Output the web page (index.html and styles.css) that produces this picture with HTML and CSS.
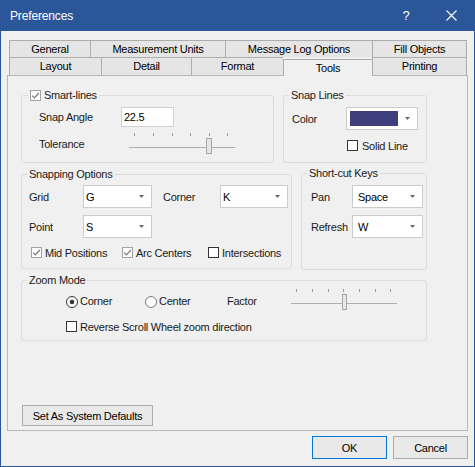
FILE: index.html
```html
<!DOCTYPE html>
<html>
<head>
<meta charset="utf-8">
<title>Preferences</title>
<link rel="stylesheet" href="styles.css">
</head>
<body>
<div class="window">
  <div class="titlebar">
    <span class="title">Preferences</span>
    <div class="tbtns">
      <span class="tbtn help">?</span>
      <span class="tbtn close"><svg width="11" height="11" viewBox="0 0 11 11"><path d="M0.5 0.5 L10.5 10.5 M10.5 0.5 L0.5 10.5" stroke="#ffffff" stroke-width="1.1" fill="none"/></svg></span>
    </div>
  </div>

  <div class="tabs">
    <div class="tabrow r1">
      <div class="tab t-general">General</div>
      <div class="tab t-units">Measurement Units</div>
      <div class="tab t-log">Message Log Options</div>
      <div class="tab t-fill last">Fill Objects</div>
    </div>
    <div class="tabrow r2">
      <div class="tab t-layout">Layout</div>
      <div class="tab t-detail">Detail</div>
      <div class="tab t-format">Format</div>
      <div class="tab t-tools sel">Tools</div>
      <div class="tab t-print last">Printing</div>
    </div>
  </div>

  <div class="panel">
    <div class="prow row-a">
      <div class="group g-smart">
        <div class="legend legend-cb">
          <svg class="cb" width="11" height="11" viewBox="0 0 11 11"><rect x="0.5" y="0.5" width="10" height="10" fill="#ffffff" stroke="#a3a3a3"/><path d="M2.2 5.6 L4.4 7.9 L8.9 3" fill="none" stroke="#7c7c7c" stroke-width="1.3"/></svg>
          <span>Smart-lines</span>
        </div>
        <div class="line l-angle">
          <span class="lbl w82">Snap Angle</span>
          <div class="input">22.5</div>
        </div>
        <div class="line l-tol">
          <span class="lbl w90">Tolerance</span>
          <svg class="slider" width="106" height="22" viewBox="0 0 106 22">
            <g stroke="#9a9a9a" stroke-width="1">
              <line x1="5.5" y1="0" x2="5.5" y2="3"/>
              <line x1="24.5" y1="0" x2="24.5" y2="3"/>
              <line x1="43.5" y1="0" x2="43.5" y2="3"/>
              <line x1="61.5" y1="0" x2="61.5" y2="3"/>
              <line x1="80.5" y1="0" x2="80.5" y2="3"/>
              <line x1="98.5" y1="0" x2="98.5" y2="3"/>
            </g>
            <line x1="0" y1="14.5" x2="106" y2="14.5" stroke="#b0b0b0" stroke-width="1"/>
            <rect x="77.5" y="5.5" width="5" height="15" fill="#e6e6e6" stroke="#a5a5a5"/>
          </svg>
        </div>
      </div>

      <div class="group g-snaplines">
        <div class="legend"><span>Snap Lines</span></div>
        <div class="line l-color">
          <span class="lbl w54">Color</span>
          <div class="combo c-color">
            <span class="swatch"></span>
            <svg class="arrow" width="5" height="3" viewBox="0 0 5 3"><path d="M0 0 H5 L2.5 3 Z" fill="#6a6a6a"/></svg>
          </div>
        </div>
        <div class="line l-solid">
          <label class="check">
            <svg class="cb" width="11" height="11" viewBox="0 0 11 11"><rect x="0.5" y="0.5" width="10" height="10" fill="#ffffff" stroke="#333333"/></svg>
            <span>Solid Line</span>
          </label>
        </div>
      </div>
    </div>

    <div class="prow row-b">
      <div class="group g-snapping">
        <div class="legend"><span>Snapping Options</span></div>
        <div class="line l-grid">
          <span class="lbl w54">Grid</span>
          <div class="combo c-69"><span class="ctext">G</span><svg class="arrow" width="5" height="3" viewBox="0 0 5 3"><path d="M0 0 H5 L2.5 3 Z" fill="#6a6a6a"/></svg></div>
          <span class="lbl w57 ml11">Corner</span>
          <div class="combo c-68"><span class="ctext">K</span><svg class="arrow" width="5" height="3" viewBox="0 0 5 3"><path d="M0 0 H5 L2.5 3 Z" fill="#6a6a6a"/></svg></div>
        </div>
        <div class="line l-point">
          <span class="lbl w54">Point</span>
          <div class="combo c-69"><span class="ctext">S</span><svg class="arrow" width="5" height="3" viewBox="0 0 5 3"><path d="M0 0 H5 L2.5 3 Z" fill="#6a6a6a"/></svg></div>
        </div>
        <div class="line l-checks">
          <label class="check w91">
            <svg class="cb" width="11" height="11" viewBox="0 0 11 11"><rect x="0.5" y="0.5" width="10" height="10" fill="#ffffff" stroke="#a3a3a3"/><path d="M2.2 5.6 L4.4 7.9 L8.9 3" fill="none" stroke="#7c7c7c" stroke-width="1.3"/></svg>
            <span>Mid Positions</span>
          </label>
          <label class="check w86">
            <svg class="cb" width="11" height="11" viewBox="0 0 11 11"><rect x="0.5" y="0.5" width="10" height="10" fill="#ffffff" stroke="#a3a3a3"/><path d="M2.2 5.6 L4.4 7.9 L8.9 3" fill="none" stroke="#7c7c7c" stroke-width="1.3"/></svg>
            <span>Arc Centers</span>
          </label>
          <label class="check">
            <svg class="cb" width="11" height="11" viewBox="0 0 11 11"><rect x="0.5" y="0.5" width="10" height="10" fill="#ffffff" stroke="#333333"/></svg>
            <span>Intersections</span>
          </label>
        </div>
      </div>

      <div class="group g-shortcut">
        <div class="legend"><span>Short-cut Keys</span></div>
        <div class="line l-pan">
          <span class="lbl w41">Pan</span>
          <div class="combo c-71"><span class="ctext wide">Space</span><svg class="arrow" width="5" height="3" viewBox="0 0 5 3"><path d="M0 0 H5 L2.5 3 Z" fill="#6a6a6a"/></svg></div>
        </div>
        <div class="line l-refresh">
          <span class="lbl w41">Refresh</span>
          <div class="combo c-71"><span class="ctext wide">W</span><svg class="arrow" width="5" height="3" viewBox="0 0 5 3"><path d="M0 0 H5 L2.5 3 Z" fill="#6a6a6a"/></svg></div>
        </div>
      </div>
    </div>

    <div class="prow row-c">
      <div class="group g-zoom">
        <div class="legend"><span>Zoom Mode</span></div>
        <div class="line l-mode">
          <label class="radio w79">
            <svg width="12" height="12" viewBox="0 0 12 12"><circle cx="6" cy="6" r="5.5" fill="#ffffff" stroke="#333333"/><circle cx="6" cy="6" r="2.3" fill="#333333"/></svg>
            <span>Corner</span>
          </label>
          <label class="radio w82">
            <svg width="12" height="12" viewBox="0 0 12 12"><circle cx="6" cy="6" r="5.5" fill="#ffffff" stroke="#7a7a7a"/></svg>
            <span>Center</span>
          </label>
          <span class="lbl w64 factor">Factor</span>
          <svg class="slider" width="106" height="22" viewBox="0 0 106 22">
            <g stroke="#9a9a9a" stroke-width="1">
              <line x1="5.5" y1="0" x2="5.5" y2="3"/>
              <line x1="21.5" y1="0" x2="21.5" y2="3"/>
              <line x1="37.5" y1="0" x2="37.5" y2="3"/>
              <line x1="52.5" y1="0" x2="52.5" y2="3"/>
              <line x1="68.5" y1="0" x2="68.5" y2="3"/>
              <line x1="84.5" y1="0" x2="84.5" y2="3"/>
              <line x1="99.5" y1="0" x2="99.5" y2="3"/>
            </g>
            <line x1="0" y1="14.5" x2="106" y2="14.5" stroke="#b0b0b0" stroke-width="1"/>
            <rect x="51.5" y="5.5" width="4" height="15" fill="#e6e6e6" stroke="#a5a5a5"/>
          </svg>
        </div>
        <div class="line l-reverse">
          <label class="check">
            <svg class="cb" width="11" height="11" viewBox="0 0 11 11"><rect x="0.5" y="0.5" width="10" height="10" fill="#ffffff" stroke="#333333"/></svg>
            <span>Reverse Scroll Wheel zoom direction</span>
          </label>
        </div>
      </div>
    </div>

    <div class="prow row-d">
      <div class="button b-defaults">Set As System Defaults</div>
    </div>
  </div>

  <div class="footer">
    <div class="button b-dlg b-ok">OK</div>
    <div class="button b-dlg">Cancel</div>
  </div>
</div>
</body>
</html>
```

FILE: styles.css
```css
* { box-sizing: border-box; }

html, body {
  margin: 0;
  padding: 0;
}

body {
  background: #f0f0f0;
  font-family: "Liberation Sans", Arial, sans-serif;
  font-size: 11px;
  letter-spacing: -0.25px;
  color: #1a1a1a;
}

.window {
  width: 475px;
  height: 467px;
  border: 1px solid #2b579a;
  border-top: none;
  background: #f0f0f0;
  display: flex;
  flex-direction: column;
}

/* title bar */
.titlebar {
  height: 31px;
  background: #2b579a;
  color: #ffffff;
  display: flex;
  align-items: center;
  flex-shrink: 0;
}

.title {
  padding-left: 9px;
  font-size: 12px;
  letter-spacing: -0.15px;
}

.tbtns {
  margin-left: auto;
  display: flex;
  height: 31px;
}

.tbtn {
  height: 31px;
  display: flex;
  align-items: center;
  justify-content: center;
}

.help {
  width: 46px;
  font-size: 13px;
  letter-spacing: 0;
}

.close {
  width: 45px;
}

/* tabs */
.tabs {
  margin-top: 9px;
  margin-left: 8px;
  display: flex;
  flex-direction: column;
}

.tabrow {
  display: flex;
  align-items: flex-start;
}

.tab {
  border-top: 1px solid #adadad;
  border-left: 1px solid #adadad;
  background: #e5e5e5;
  color: #000000;
  display: flex;
  align-items: center;
  justify-content: center;
  padding-bottom: 1px;
  white-space: nowrap;
}

.tab.last {
  border-right: 1px solid #adadad;
}

.r1 .tab { height: 17px; }
.r2 .tab { height: 18px; }

.t-general { width: 81px; }
.t-units { width: 135px; }
.t-log { width: 147px; }
.t-fill { width: 95px; }

.t-layout { width: 92px; }
.t-detail { width: 90px; }
.t-format { width: 92px; }
.t-tools { width: 89px; }
.t-print { width: 95px; }

.r2 .tab.sel {
  height: 17px;
  margin-top: 2px;
  margin-bottom: -1px;
  padding-bottom: 0;
  background: #f0f0f0;
  position: relative;
  z-index: 2;
}

/* panel */
.panel {
  margin-left: 6px;
  width: 461px;
  height: 356px;
  border: 1px solid #b8b8b8;
  background: #f0f0f0;
  padding: 19px 0 0 13px;
  display: flex;
  flex-direction: column;
  flex-shrink: 0;
}

.prow {
  display: flex;
  align-items: flex-start;
  gap: 9px;
}

.row-b { margin-top: 10px; }
.row-c { margin-top: 10px; }
.row-d { margin-top: 64px; }

.group {
  border: 1px solid #dcdcdc;
  border-radius: 3px;
  display: flex;
  flex-direction: column;
}

.g-smart { width: 253px; height: 68px; }
.g-snaplines { width: 144px; height: 68px; }
.g-snapping { width: 271px; height: 95px; margin-top: 1px; }
.g-shortcut { width: 126px; height: 97px; }
.g-zoom { width: 406px; height: 61px; }

.legend {
  align-self: flex-start;
  margin: -7px 0 0 5px;
  padding: 0 2px;
  height: 13px;
  line-height: 13px;
  background: #f0f0f0;
  display: flex;
  align-items: center;
  gap: 3px;
  white-space: nowrap;
}

.legend-cb { margin-left: 6px; }

.line {
  display: flex;
  align-items: center;
  white-space: nowrap;
}

.lbl { display: block; flex-shrink: 0; }
.w41 { width: 41px; }
.w54 { width: 54px; }
.w57 { width: 57px; }
.w64 { width: 64px; }
.w79 { width: 79px; }
.w82 { width: 82px; }
.w86 { width: 86px; }
.w90 { width: 90px; }
.w91 { width: 91px; }
.ml11 { margin-left: 11px; }

.cb, .slider { display: block; flex-shrink: 0; }

/* smart-lines */
.l-angle { margin-top: 5px; padding-left: 17px; }
.l-tol { margin-top: 6px; padding-left: 17px; }

.input {
  width: 53px;
  height: 20px;
  background: #ffffff;
  border: 1px solid #d2d2d2;
  padding-left: 2px;
  display: flex;
  align-items: center;
  color: #000000;
}

/* combos */
.combo {
  height: 23px;
  background: #ffffff;
  border: 1px solid #cccccc;
  display: flex;
  align-items: center;
  color: #000000;
  flex-shrink: 0;
}

.combo .arrow {
  margin-left: auto;
  margin-right: 7px;
  display: block;
}

.ctext { padding-left: 2px; }
.ctext.wide { padding-left: 5px; }

.c-color { width: 72px; padding-left: 3px; }
.c-68 { width: 68px; }
.c-69 { width: 69px; }
.c-71 { width: 71px; }

.swatch {
  width: 48px;
  height: 15px;
  background: #3e3e7c;
  display: block;
}

/* snap lines */
.l-color { margin-top: 5px; padding-left: 8px; }
.l-solid { margin-top: 9px; padding-left: 63px; height: 13px; }

.check, .radio {
  display: flex;
  align-items: center;
  gap: 4px;
  height: 13px;
  flex-shrink: 0;
}

.radio { gap: 2px; }

/* snapping options */
.l-grid { margin-top: 4px; padding-left: 7px; }
.l-point { margin-top: 7px; padding-left: 7px; }
.l-checks { margin-top: 8px; padding-left: 9px; height: 13px; }
.l-checks .check { gap: 3px; }

/* short-cut keys */
.l-pan { margin-top: 5px; padding-left: 9px; }
.l-refresh { margin-top: 7px; padding-left: 9px; }

/* zoom mode */
.l-mode {
  margin-top: 2px;
  padding-left: 44px;
  height: 22px;
  align-items: flex-start;
}

.l-mode .radio, .l-mode .factor {
  margin-top: 6px;
  height: 13px;
  line-height: 13px;
}

.l-reverse { margin-top: 9px; padding-left: 44px; height: 13px; }
.l-reverse .check { gap: 3px; }

/* buttons */
.button {
  border: 1px solid #adadad;
  background: #e9e9e9;
  display: flex;
  align-items: center;
  justify-content: center;
  color: #000000;
  white-space: nowrap;
}

.b-defaults {
  margin-left: 1px;
  width: 131px;
  height: 21px;
}

.footer {
  margin-top: 5px;
  padding-right: 6px;
  display: flex;
  justify-content: flex-end;
  gap: 6px;
}

.b-dlg {
  width: 75px;
  height: 23px;
}

.b-ok {
  border-color: #0078d7;
}
```
